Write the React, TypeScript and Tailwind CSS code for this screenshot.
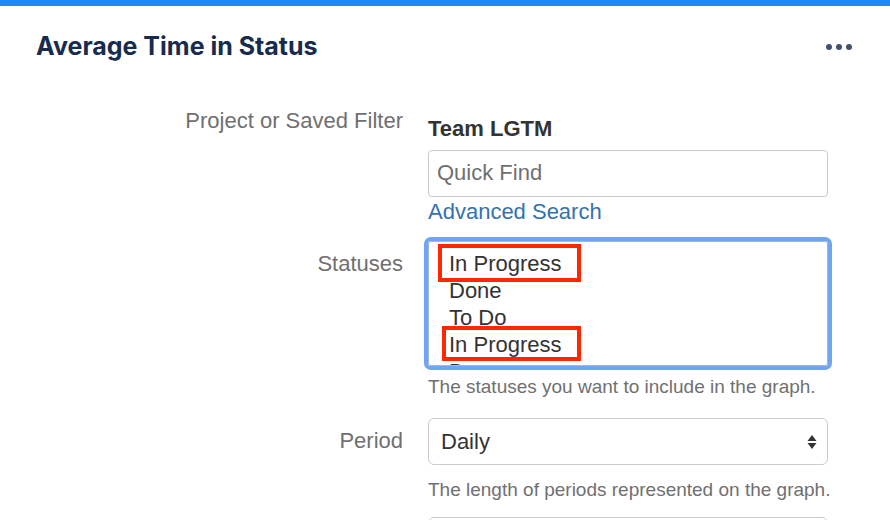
export default function App() {
  const statuses = ["In Progress", "Done", "To Do", "In Progress", "Done"];

  return (
    <div className="w-[890px] h-[520px] overflow-hidden bg-white font-['Liberation_Sans',Arial,sans-serif]">
      {/* top accent */}
      <div className="h-[6px] bg-[#2684ff]" />

      {/* header */}
      <div className="flex items-center justify-between pl-9 pr-[38px] h-[82px] pb-[1px]">
        <h1 className="font-['Inter',sans-serif] font-bold text-[25px] text-[#172b4d]">
          Average Time in Status
        </h1>
        <div className="flex gap-[4px]">
          <span className="w-[6px] h-[6px] rounded-full bg-[#42526e]" />
          <span className="w-[6px] h-[6px] rounded-full bg-[#42526e]" />
          <span className="w-[6px] h-[6px] rounded-full bg-[#42526e]" />
        </div>
      </div>

      {/* form */}
      <div className="grid grid-cols-[367px_400px] gap-x-[25px] pl-9 text-[22px]">
        {/* project or saved filter */}
        <div className="text-right text-[#707070] leading-[27px] pt-[19px]">Project or Saved Filter</div>
        <div className="pt-[27px]">
          <div className="font-bold text-[#333] leading-[27px]">Team LGTM</div>
          <div className="mt-[8px] h-[47px] border border-[#cccccc] rounded-[4px] flex items-center px-[8px] pb-[2px] text-[#707070]">
            Quick Find
          </div>
          <a href="#" className="block text-[#3572b0] leading-[27px] mt-[1px]">
            Advanced Search
          </a>
        </div>

        {/* statuses */}
        <div className="text-right text-[#707070] leading-[27px] pt-[25px]">Statuses</div>
        <div className="pt-[16px]">
          <div className="relative h-[125px] border border-[#9fb7d9] rounded-[3px] shadow-[0_0_0_4px_#70a5f4] overflow-hidden pt-[8px] pl-[20px] text-[#333]">
            {statuses.map((s, i) => (
              <div key={i} className="leading-[27px]">
                {s}
              </div>
            ))}
            <div className="absolute left-[9px] top-[2px] w-[143px] h-[38px] border-[4px] border-[#ff2600]" />
            <div className="absolute left-[13px] top-[84px] w-[139px] h-[35px] border-[4px] border-[#ff2600]" />
          </div>
          <div className="text-[19px] text-[#707070] leading-[24px] mt-[9px] whitespace-nowrap">
            The statuses you want to include in the graph.
          </div>
        </div>

        {/* period */}
        <div className="text-right text-[#707070] leading-[27px] pt-[28px]">Period</div>
        <div className="pt-[19px]">
          <div className="h-[47px] border border-[#cccccc] rounded-[6px] flex items-center justify-between pl-[12px] pr-[10px] text-[#333]">
            <span>Daily</span>
            <svg width="10" height="16" viewBox="0 0 10 16" className="fill-[#333]">
              <path d="M5 1 L9.5 7 H0.5 Z" />
              <path d="M5 15 L9.5 9 H0.5 Z" />
            </svg>
          </div>
          <div className="text-[19px] text-[#707070] leading-[24px] mt-[13px] whitespace-nowrap">
            The length of periods represented on the graph.
          </div>
          <div className="mt-[15px] h-[47px] border border-[#cccccc] rounded-[6px]" />
        </div>
      </div>
    </div>
  );
}
